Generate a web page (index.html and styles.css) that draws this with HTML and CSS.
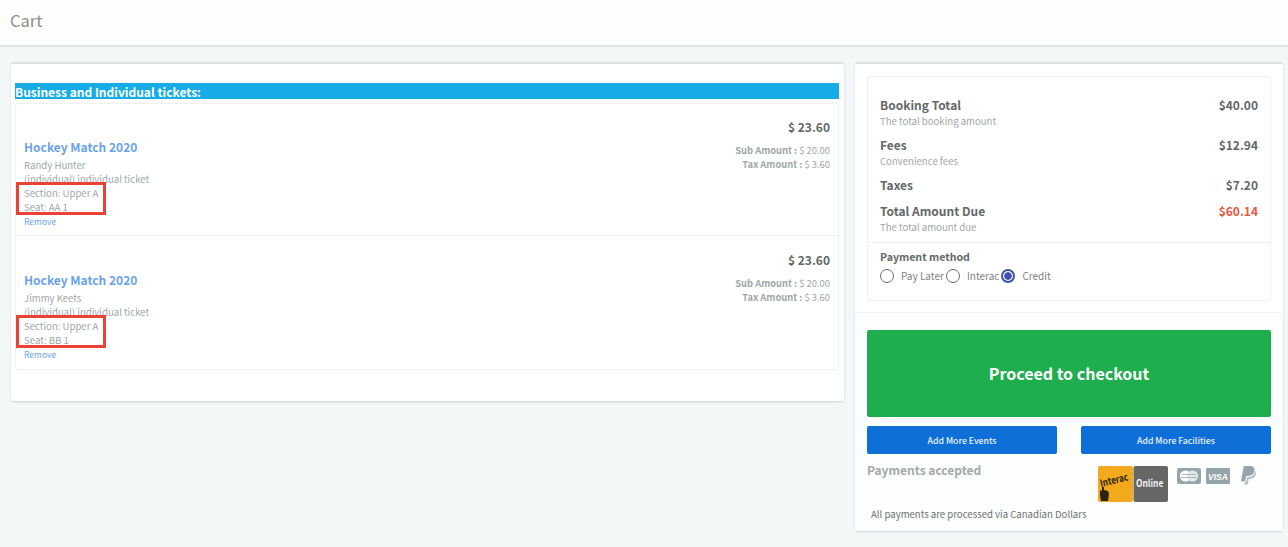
FILE: index.html
```html
<!DOCTYPE html>
<html lang="en">
<head>
  <meta charset="UTF-8" />
  <title>Cart</title>
  <link rel="stylesheet" href="styles.css">
</head>
<body>

<div class="page-header">Cart</div>

<div class="content">
  <div class="card tickets-card">
    <div class="ticket-heading">Business and Individual tickets:</div>
    <div class="ticket-list">

      <div class="ticket">
        <div class="ticket-info">
          <a class="ticket-title">Hockey Match 2020</a>
          <div class="ticket-name">Randy Hunter</div>
          <div>(individual) individual ticket</div>
          <div>Section: Upper A</div>
          <div>Seat: AA 1</div>
          <a class="remove">Remove</a>
          <span class="highlight"></span>
        </div>
        <div class="ticket-price">
          <div class="price">$ 23.60</div>
          <div><b>Sub Amount :</b> $ 20.00</div>
          <div><b>Tax Amount :</b> $ 3.60</div>
        </div>
      </div>

      <div class="ticket">
        <div class="ticket-info">
          <a class="ticket-title">Hockey Match 2020</a>
          <div class="ticket-name">Jimmy Keets</div>
          <div>(individual) individual ticket</div>
          <div>Section: Upper A</div>
          <div>Seat: BB 1</div>
          <a class="remove">Remove</a>
          <span class="highlight"></span>
        </div>
        <div class="ticket-price">
          <div class="price">$ 23.60</div>
          <div><b>Sub Amount :</b> $ 20.00</div>
          <div><b>Tax Amount :</b> $ 3.60</div>
        </div>
      </div>

    </div>
  </div>

  <div class="card summary-card">
    <div class="summary-top">
      <div class="summary-box">
        <div class="totals">
          <div class="total-row">
            <div><div class="total-label">Booking Total</div><div class="total-note">The total booking amount</div></div>
            <div class="total-value">$40.00</div>
          </div>
          <div class="total-row">
            <div><div class="total-label">Fees</div><div class="total-note">Convenience fees</div></div>
            <div class="total-value">$12.94</div>
          </div>
          <div class="total-row single">
            <div><div class="total-label">Taxes</div></div>
            <div class="total-value">$7.20</div>
          </div>
          <div class="total-row">
            <div><div class="total-label">Total Amount Due</div><div class="total-note">The total amount due</div></div>
            <div class="total-value due">$60.14</div>
          </div>
        </div>
        <div class="payment-method">
          <div class="payment-title">Payment method</div>
          <div class="radios">
            <span class="radio"></span><span class="radio-label">Pay Later</span>
            <span class="radio"></span><span class="radio-label">Interac</span>
            <span class="radio checked"></span><span class="radio-label">Credit</span>
          </div>
        </div>
      </div>
    </div>

    <div class="summary-bottom">
      <button class="btn-checkout">Proceed to checkout</button>
      <div class="more-buttons">
        <button class="btn-more">Add More Events</button>
        <button class="btn-more">Add More Facilities</button>
      </div>
      <div class="accepted">
        <div class="accepted-title">Payments accepted</div>
        <div class="logos">
          <svg class="interac" width="70" height="36" viewBox="0 0 70 36">
            <rect x="0" y="0" width="35" height="36" rx="2" fill="#f2a91c"/>
            <rect x="35.500" y="0" width="34.500" height="36" rx="2" fill="#646766"/>
            <text class="interac-word" transform="translate(3 21) rotate(-14) scale(.82 1)">Interac</text>
            <path d="M3 35l-1-5v-5l1-1 1 1v-4h2v3l4 1 1 3-1 7z" fill="#2b2413"/>
            <text class="online-word" transform="translate(38 20.500) scale(.84 1)">Online</text>
          </svg>
          <svg class="card-icon" width="24" height="16" viewBox="0 0 24 16">
            <rect width="24" height="16" rx="2" fill="#95a5a9"/>
            <circle cx="8.500" cy="8" r="5.600" fill="#fff"/>
            <circle cx="15.500" cy="8" r="5.600" fill="#e4e9ea"/>
            <path d="M5 6.500h14M4 9.500h16" stroke="#95a5a9" stroke-width=".8"/>
          </svg>
          <svg class="card-icon" width="24" height="16" viewBox="0 0 24 16">
            <rect width="24" height="16" rx="1" fill="#95a5a9"/>
            <text class="visa-word" x="12" y="11.500">VISA</text>
          </svg>
          <svg class="paypal" width="16" height="19" viewBox="0 0 17 20">
            <path d="M4 0h6c4 0 6 2 5.300 5.300C14.500 9 12 10.500 8.500 10.500H6.500L5.500 16H1z" fill="#95a5a9"/>
            <path d="M15.800 5c1.200 1 1.400 2.500 1 4-.8 3-3 4.500-6 4.500H9.200L8.300 19.500H4.500l.6-3h1.500l1-5h1.800c3.500 0 6-1.800 6.400-6.500z" fill="#b4c0c3"/>
          </svg>
        </div>
      </div>
      <div class="processed">All payments are processed via Canadian Dollars</div>
    </div>
  </div>
</div>

</body>
</html>
```

FILE: styles.css
```css
* {
  box-sizing: border-box;
}
html, body {
  height: 100%;
}
body {
  font-family: "Noto Sans CJK SC", "Source Sans Pro", "Noto Sans", sans-serif;
  font-size: 9.600px;
  margin: 0;
  background-color: #f4f7f7;
  color: #a0a7a7;
  overflow: hidden;
}
.page-header {
  height: 47px;
  padding: 9px 10px 0;
  font-size: 16.500px;
  line-height: 23px;
  color: #8a8f8f;
  background: #fdfdfb;
  border-bottom: 2px solid #dfe5e6;
}
.content {
  display: flex;
  align-items: flex-start;
  gap: 11px;
  padding: 15px 4px 0 11px;
}
.card {
  background: white;
  border-radius: 3px;
  border-top: 2px solid #dce2e4;
  box-shadow: 0 1px 2px rgba(0,0,0,0.15);
}
.tickets-card {
  width: 833px;
  height: 339px;
  padding: 19px 5px 0 4px;
}
.ticket-heading {
  height: 16px;
  font-size: 12px;
  font-weight: 700;
  line-height: 17px;
  color: white;
  background: #17ace8;
}
.ticket-list {
  margin-top: 4px;
  height: 267px;
  border: 1px solid #eff1f1;
  border-radius: 3px;
}
.ticket {
  display: flex;
  justify-content: space-between;
  height: 132px;
  padding: 0 8px;
  border-bottom: 1px solid #eff1f1;
}
.ticket + .ticket {
  padding-top: 1px;
  border-bottom: none;
}
.ticket-info {
  position: relative;
  padding-top: 33px;
  line-height: 14px;
}
.ticket-title {
  display: block;
  margin-bottom: 1px;
  font-size: 12px;
  font-weight: 600;
  line-height: 20px;
  color: #6aa3ec;
}
.remove {
  display: block;
  font-size: 8.500px;
  line-height: 13px;
  margin-top: 1px;
  color: #6aa3ec;
}
.highlight {
  position: absolute;
  left: -8px;
  top: 78px;
  width: 90px;
  height: 33px;
  border: 3px solid #ea4335;
}
.ticket-price {
  padding-top: 14px;
  font-size: 9.400px;
  text-align: right;
  line-height: 14px;
}
.ticket-price b {
  font-weight: 600;
}
.price {
  margin-bottom: 7px;
  font-size: 12px;
  font-weight: 700;
  line-height: 18px;
  color: #646868;
}
.summary-card {
  width: 428px;
  height: 469px;
  display: flex;
  flex-direction: column;
}
.summary-top {
  padding: 12px 12px 11px;
  border-bottom: 1px solid #f0f2f2;
}
.summary-box {
  height: 225px;
  border: 1px solid #f0f2f2;
  border-radius: 3px;
}
.totals {
  height: 166px;
  padding: 19px 12px 0;
  border-bottom: 1px solid #eceeee;
}
.total-row {
  display: flex;
  justify-content: space-between;
  align-items: flex-start;
  margin-bottom: 7px;
}
.total-row.single {
  margin-bottom: 9px;
}
.total-label, .total-value {
  font-size: 12px;
  font-weight: 600;
  line-height: 17px;
  color: #646868;
}
.total-value {
  font-weight: 700;
}
.total-value.due {
  color: #e9573f;
}
.total-note {
  line-height: 16px;
}
.payment-method {
  padding: 6px 12px 0;
}
.payment-title {
  font-size: 10.600px;
  font-weight: 600;
  line-height: 16px;
  color: #646868;
}
.radios {
  display: flex;
  align-items: center;
  margin-top: 4px;
  font-size: 10px;
  color: #7d8383;
}
.radio {
  width: 14px;
  height: 14px;
  border: 1px solid #6a6a6a;
  border-radius: 50%;
  flex: none;
}
.radio.checked {
  border: 2px solid #3f51b5;
  background: radial-gradient(circle, #3f51b5 3.500px, white 4px);
}
.radio-label {
  margin-left: 7px;
  margin-right: 2px;
  line-height: 14px;
}
.summary-bottom {
  flex: 1;
  padding: 17px 12px 0;
  background: #fcfdfd;
}
.btn-checkout {
  display: block;
  width: 100%;
  height: 87px;
  padding-bottom: 2px;
  font-family: inherit;
  font-size: 16px;
  font-weight: 600;
  color: white;
  background: #1eae4e;
  border: none;
  border-radius: 2px;
}
.more-buttons {
  display: flex;
  justify-content: space-between;
  margin-top: 9px;
}
.btn-more {
  width: 190px;
  height: 28px;
  padding-bottom: 1px;
  font-family: inherit;
  font-size: 8.700px;
  font-weight: 500;
  color: #eaf3fc;
  background: #0f6fd8;
  border: none;
  border-radius: 2px;
}
.accepted {
  display: flex;
  justify-content: space-between;
  margin-top: 7px;
}
.accepted-title {
  font-size: 12px;
  font-weight: 600;
  line-height: 18px;
  color: #a3aaaa;
}
.logos {
  display: flex;
  align-items: flex-start;
  gap: 5px;
  padding: 5px 15px 0 0;
}
.interac {
  margin-right: 4px;
}
.interac-word {
  font-size: 10px;
  font-weight: 700;
  fill: #2b2413;
}
.online-word {
  font-size: 10px;
  font-weight: 700;
  fill: #f2f2f2;
}
.card-icon {
  margin-top: 2px;
}
.visa-word {
  font-family: "Liberation Sans", sans-serif;
  font-size: 8.500px;
  font-style: italic;
  font-weight: 700;
  text-anchor: middle;
  fill: #fff;
}
.paypal {
  margin-left: 5px;
}
.processed {
  margin: 5px 0 0 4px;
  line-height: 14px;
  color: #6c7272;
}
```
